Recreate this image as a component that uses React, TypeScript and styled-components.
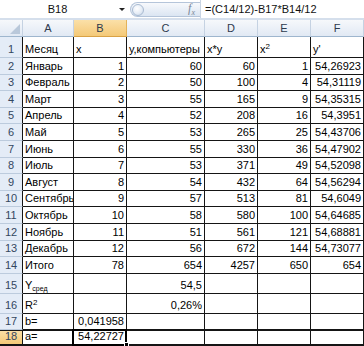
import React from "react";
import styled, { createGlobalStyle } from "styled-components";

const GlobalStyle = createGlobalStyle`
  body {
    margin: 0;
    background: #fff;
    font-family: "Liberation Sans", Arial, sans-serif;
  }
`;

const COLS = "23px 51px 53px 78px 53px 53px 53px";
const LINE = "#151515";

const Sheet = styled.div`
  width: 364px;
  height: 346px;
  overflow: hidden;
  background: #fff;
`;

const FormulaBar = styled.div`
  display: flex;
  align-items: stretch;
  height: 20px;
  box-sizing: border-box;
  border-bottom: 2px solid #d5dfec;
  font-size: 11px;
`;

const NameBox = styled.div`
  width: 115px;
  display: flex;
  align-items: center;
  justify-content: center;
  color: #111;
`;

const DropArrow = styled.div`
  width: 13px;
  display: flex;
  align-items: center;
  justify-content: center;
  &::after {
    content: "";
    border-left: 3px solid transparent;
    border-right: 3px solid transparent;
    border-top: 3px solid #222;
  }
`;

const FxPill = styled.div`
  margin: 2px 0 1px 2px;
  width: 70px;
  display: flex;
  align-items: center;
  justify-content: space-between;
  box-sizing: border-box;
  padding: 0 5px 0 1px;
  border: 1px solid #b5c5da;
  border-right: none;
  border-radius: 9px 0 0 9px;
  background: linear-gradient(#f7f9fc, #dbe5f2);
`;

const Grip = styled.div`
  width: 12px;
  height: 12px;
  border-radius: 50%;
  box-sizing: border-box;
  border: 1px solid #a9bbd2;
  background: radial-gradient(circle at 40% 35%, #ffffff 0%, #e6edf6 55%, #c4d2e4 100%);
`;

const Fx = styled.span`
  font-family: "Liberation Serif", serif;
  font-style: italic;
  font-size: 12px;
  color: #7b8799;
  sub {
    font-size: 8px;
  }
`;

const FormulaText = styled.div`
  flex: 1;
  display: flex;
  align-items: center;
  padding-left: 4px;
  border-left: 1px solid #c9d5e4;
  color: #111;
  white-space: nowrap;
`;

const GridRow = styled.div<{ $h: number }>`
  display: grid;
  grid-template-columns: ${COLS};
  height: ${(p) => p.$h}px;
`;

const Corner = styled.div`
  box-sizing: border-box;
  background: linear-gradient(#f6f8fb, #e1e9f4);
  border-right: 1px solid #c5d2e2;
  border-bottom: 1px solid #9eb6ce;
  display: flex;
  align-items: flex-end;
  justify-content: flex-end;
  padding: 0 2px 2px 0;
  &::after {
    content: "";
    border-left: 10px solid transparent;
    border-bottom: 10px solid #b9c8da;
  }
`;

const ColHeader = styled.div<{ $active?: boolean }>`
  box-sizing: border-box;
  display: flex;
  align-items: center;
  justify-content: center;
  font-size: 11px;
  color: #2d3a4d;
  border-right: 1px solid ${(p) => (p.$active ? "#e3b25a" : "#c5d2e2")};
  border-bottom: 1px solid ${(p) => (p.$active ? "#d9a246" : "#9eb6ce")};
  background: ${(p) =>
    p.$active
      ? "linear-gradient(#fbe0a8, #f4c978)"
      : "linear-gradient(#f6f8fb, #e1e9f4)"};
`;

const RowHeader = styled.div<{ $active?: boolean; $last?: boolean }>`
  box-sizing: border-box;
  display: flex;
  align-items: flex-end;
  justify-content: center;
  padding-bottom: 1px;
  font-size: 11px;
  line-height: 13px;
  color: #33475f;
  background: ${(p) =>
    p.$active ? "linear-gradient(#fbe0a8, #f4c978)" : "#e4ecf7"};
  border-right: 1px solid ${LINE};
  border-bottom: ${(p) => (p.$last ? `2px solid ${LINE}` : "1px solid #bccbdd")};
  box-shadow: ${(p) => (p.$last ? `inset 0 1px 0 ${LINE}` : "none")};
`;

const Cell = styled.div<{ $right?: boolean; $active?: boolean; $last?: boolean }>`
  position: relative;
  box-sizing: border-box;
  display: flex;
  align-items: flex-end;
  justify-content: ${(p) => (p.$right ? "flex-end" : "flex-start")};
  padding: 0 2px 1px 2px;
  font-size: 11px;
  line-height: 13px;
  color: #000;
  white-space: nowrap;
  overflow: ${(p) => (p.$active ? "visible" : "hidden")};
  border-right: 1px solid ${LINE};
  border-bottom: ${(p) => (p.$last ? `2px solid ${LINE}` : `1px solid ${LINE}`)};
  box-shadow: ${(p) => (p.$last ? `inset 0 1px 0 ${LINE}` : "none")};
  z-index: ${(p) => (p.$active ? 2 : "auto")};

  ${(p) =>
    p.$active &&
    `
    &::after {
      content: "";
      position: absolute;
      left: -2px;
      top: -1px;
      right: -1px;
      bottom: -2px;
      border: 2px solid #000;
    }
    &::before {
      content: "";
      position: absolute;
      right: -3px;
      bottom: -3px;
      width: 5px;
      height: 5px;
      background: #000;
      border: 1px solid #fff;
      box-sizing: border-box;
      z-index: 3;
    }
  `}
`;

const CellText = styled.span`
  display: inline-block;
`;

const Sup = styled.sup`
  font-size: 8px;
  line-height: 0;
  vertical-align: 4px;
`;

const Sub = styled.sub`
  font-size: 7px;
  line-height: 0;
  vertical-align: -2px;
`;

type Value = React.ReactNode;

interface SheetRow {
  n: number;
  h: number;
  cells: Value[];
}

const rows: SheetRow[] = [
  {
    n: 1,
    h: 21,
    cells: [
      "Месяц",
      "x",
      "у,компьютеры",
      "x*y",
      <>
        x<Sup>2</Sup>
      </>,
      "y'",
    ],
  },
  { n: 2, h: 16.6, cells: ["Январь", "1", "60", "60", "1", "54,26923"] },
  { n: 3, h: 16.6, cells: ["Февраль", "2", "50", "100", "4", "54,31119"] },
  { n: 4, h: 16.6, cells: ["Март", "3", "55", "165", "9", "54,35315"] },
  { n: 5, h: 16.6, cells: ["Апрель", "4", "52", "208", "16", "54,3951"] },
  { n: 6, h: 16.6, cells: ["Май", "5", "53", "265", "25", "54,43706"] },
  { n: 7, h: 16.6, cells: ["Июнь", "6", "55", "330", "36", "54,47902"] },
  { n: 8, h: 16.6, cells: ["Июль", "7", "53", "371", "49", "54,52098"] },
  { n: 9, h: 16.6, cells: ["Август", "8", "54", "432", "64", "54,56294"] },
  { n: 10, h: 16.6, cells: ["Сентябрь", "9", "57", "513", "81", "54,6049"] },
  { n: 11, h: 16.6, cells: ["Октябрь", "10", "58", "580", "100", "54,64685"] },
  { n: 12, h: 16.6, cells: ["Ноябрь", "11", "51", "561", "121", "54,68881"] },
  { n: 13, h: 16.6, cells: ["Декабрь", "12", "56", "672", "144", "54,73077"] },
  { n: 14, h: 16.6, cells: ["Итого", "78", "654", "4257", "650", "654"] },
  {
    n: 15,
    h: 20,
    cells: [
      <>
        Y<Sub>сред</Sub>
      </>,
      "",
      "54,5",
      "",
      "",
      "",
    ],
  },
  {
    n: 16,
    h: 20,
    cells: [
      <>
        R<Sup>2</Sup>
      </>,
      "",
      "0,26%",
      "",
      "",
      "",
    ],
  },
  { n: 17, h: 16.6, cells: ["b=", "0,041958", "", "", "", ""] },
  { n: 18, h: 15, cells: ["a=", "54,22727", "", "", "", ""] },
];

const letters = ["A", "B", "C", "D", "E", "F"];

const isNumber = (v: Value) => typeof v === "string" && /^[\d,%]+$/.test(v);

export default function App() {
  return (
    <Sheet>
      <GlobalStyle />
      <FormulaBar>
        <NameBox>B18</NameBox>
        <DropArrow />
        <FxPill>
          <Grip />
          <Fx>
            f<sub>x</sub>
          </Fx>
        </FxPill>
        <FormulaText>=(C14/12)-B17*B14/12</FormulaText>
      </FormulaBar>

      <GridRow $h={17}>
        <Corner />
        {letters.map((l) => (
          <ColHeader key={l} $active={l === "B"}>
            {l}
          </ColHeader>
        ))}
      </GridRow>

      {rows.map((row) => {
        const last = row.n === 18;
        return (
          <GridRow key={row.n} $h={row.h}>
            <RowHeader $active={last} $last={last}>
              {row.n}
            </RowHeader>
            {row.cells.map((v, i) => (
              <Cell
                key={i}
                $right={isNumber(v)}
                $active={last && i === 1}
                $last={last}
              >
                <CellText>{v}</CellText>
              </Cell>
            ))}
          </GridRow>
        );
      })}
    </Sheet>
  );
}
